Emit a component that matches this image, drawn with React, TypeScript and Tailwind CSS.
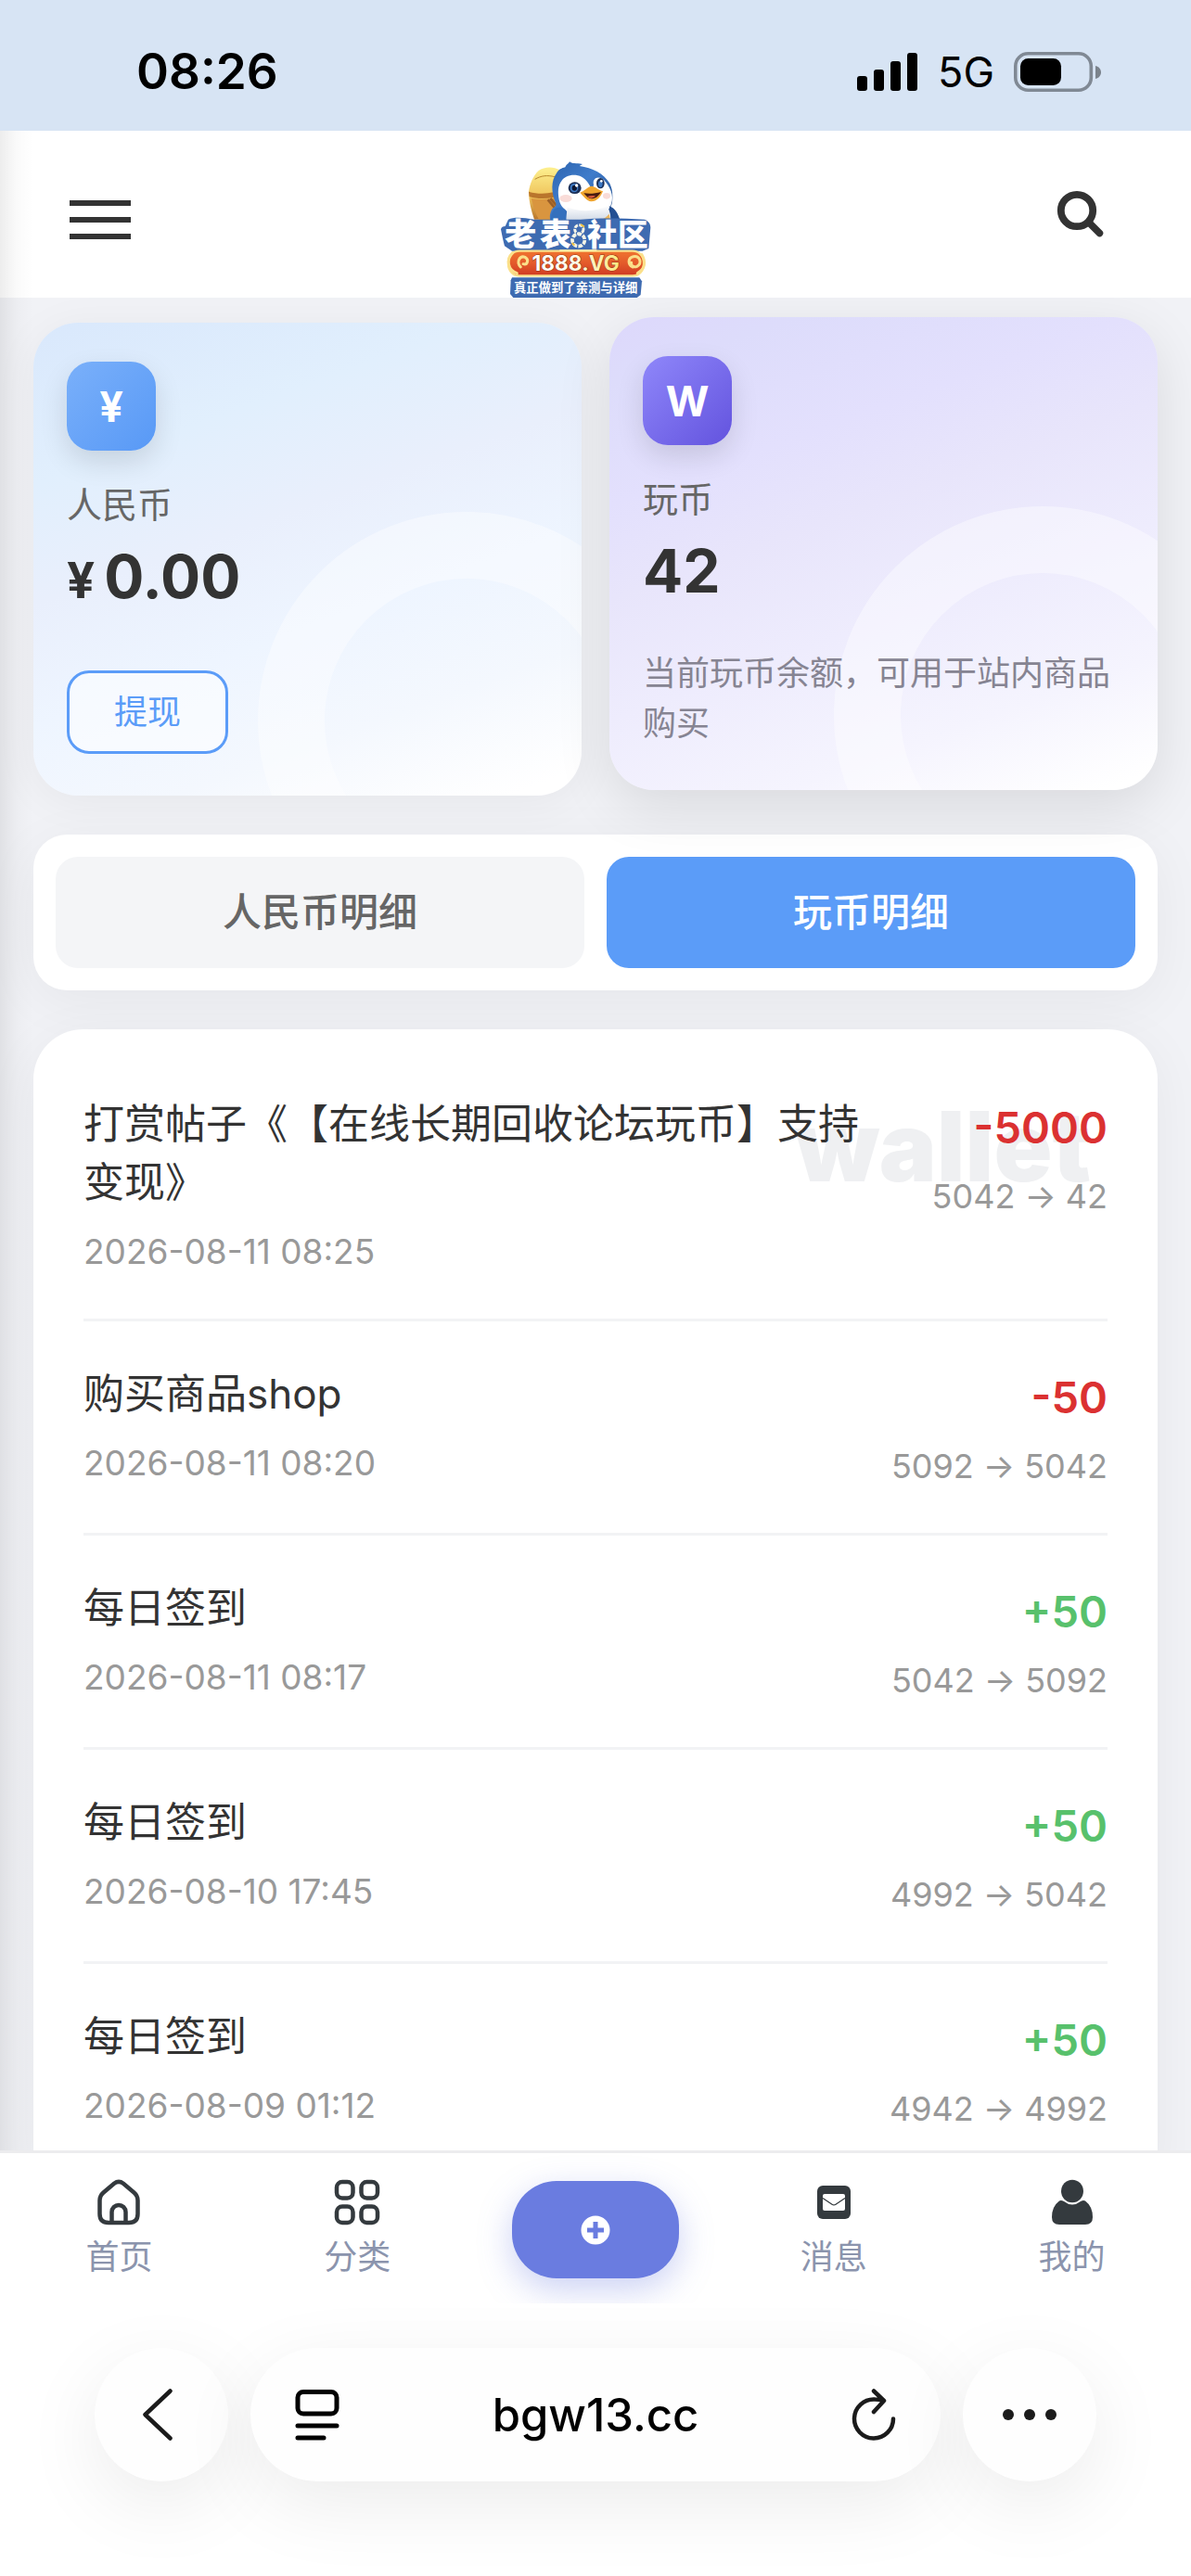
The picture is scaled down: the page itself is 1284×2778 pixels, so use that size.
import React from "react";

type Entry = {
  title: string;
  time: string;
  amount: string;
  from: string;
  to: string;
};

const entries: Entry[] = [
  { title: "打赏帖子《【在线长期回收论坛玩币】支持变现》", time: "2026-08-11 08:25", amount: "-5000", from: "5042", to: "42" },
  { title: "购买商品shop", time: "2026-08-11 08:20", amount: "-50", from: "5092", to: "5042" },
  { title: "每日签到", time: "2026-08-11 08:17", amount: "+50", from: "5042", to: "5092" },
  { title: "每日签到", time: "2026-08-10 17:45", amount: "+50", from: "4992", to: "5042" },
  { title: "每日签到", time: "2026-08-09 01:12", amount: "+50", from: "4942", to: "4992" },
];

function StatusBar() {
  return (
    <div className="flex h-[141px] shrink-0 items-center justify-between bg-[#d7e4f4] pt-3.5 pr-[96px] pl-[147px]">
      <span className="text-[53px] leading-none font-semibold text-black">08:26</span>
      <div className="flex items-center gap-[21px]">
        <svg width="66" height="42" viewBox="0 0 66 42" className="fill-black">
          <rect x="0" y="25" width="11" height="16" rx="3" />
          <rect x="18" y="18" width="11" height="23" rx="3" />
          <rect x="36" y="9" width="11" height="32" rx="3" />
          <rect x="54" y="0" width="11" height="41" rx="3" />
        </svg>
        <span className="text-[45px] leading-none text-black">5G</span>
        <svg width="95" height="44" viewBox="0 0 95 44">
          <rect x="1.8" y="1.8" width="81.500" height="39.500" rx="13.500" fill="none" stroke="#808994" strokeWidth="3.600" />
          <rect x="7" y="7" width="44" height="29" rx="8.500" fill="#000" />
          <path d="M88 15c4 1 6 4 6 7s-2 6-6 7z" fill="#7b838c" />
        </svg>
      </div>
    </div>
  );
}

function Logo() {
  return (
    <svg width="240" height="180" viewBox="0 3 720 540" role="img" aria-label="老表社区 1888.VG">
      <defs>
        <linearGradient id="barrel" x1="0" y1="0" x2="0" y2="1">
          <stop offset="0" stopColor="#fdf08f" />
          <stop offset="0.55" stopColor="#efc45c" />
          <stop offset="1" stopColor="#b9752c" />
        </linearGradient>
        <linearGradient id="blue" x1="0" y1="0" x2="1" y2="1">
          <stop offset="0" stopColor="#2b62ad" />
          <stop offset="0.4" stopColor="#3f7ccb" />
          <stop offset="1" stopColor="#1c3f78" />
        </linearGradient>
        <linearGradient id="belly" x1="0" y1="0" x2="0" y2="1">
          <stop offset="0" stopColor="#ffffff" />
          <stop offset="1" stopColor="#c9d3e2" />
        </linearGradient>
        <linearGradient id="red" x1="0" y1="0" x2="0" y2="1">
          <stop offset="0" stopColor="#f0742f" />
          <stop offset="0.5" stopColor="#e35a2b" />
          <stop offset="1" stopColor="#cf3a22" />
        </linearGradient>
        <linearGradient id="gold" x1="0" y1="0" x2="1" y2="0">
          <stop offset="0" stopColor="#ffffff" />
          <stop offset="0.5" stopColor="#fffbe6" />
          <stop offset="1" stopColor="#fbe67e" />
        </linearGradient>
      </defs>
      <path d="M182 132c18-14 50-14 68-2l-6 160h-76c-10-30-18-60-18-90 4-26 14-50 32-68z" fill="url(#barrel)" />
      <path d="M150 200c26 8 54 8 80 2l2 16c-28 6-56 6-80-2z" fill="#b9752c" />
      <path d="M170 160c20-12 40-14 64-8" fill="none" stroke="#b98a2e" strokeWidth="3" />
      <path d="M158 222c8 30 14 50 26 70h50v-72c-26 6-52 6-76 2z" fill="#d9953f" />
      <path d="M212 226l40 48M220 222l44 50" stroke="#9b5f28" strokeWidth="8" />
      <path d="M240 140c8-12 16-16 28-19 4-10 10-10 14-18 8 8 20 4 42 8l-10 6c42 6 78 24 98 56 10 22 10 40 8 62-2 10-6 16-6 16 16 12 26 22 34 49H222c-6-16-4-30 4-44 10-8 14-10 12-18-16-36-16-74 2-98z" fill="url(#blue)" />
      <path d="M256 166c14-24 64-30 86 6l14 22 4-16c-6-24 20-34 40-8 20 26 26 52 14 78-16 30-46 38-78 36-42-2-82-24-88-58-4-24-4-44 8-60z" fill="#fff" />
      <path d="M274 250c44 18 96 14 130-4 8 16 14 38 14 54H268c4-24 6-30 6-50z" fill="url(#belly)" />
      <path d="M270 260c-14-12-34-12-42 4-6 12-6 18-6 36h50z" fill="#3470bd" />
      <path d="M410 246c20 8 30 24 36 54h-32c2-20 2-38-4-54z" fill="#234f93" />
      <path d="M262 290c20 6 50 8 76 8s60-8 72-26l6 30H262z" fill="#eab45c" />
      <ellipse cx="299" cy="188" rx="21" ry="19" fill="#1b2f57" />
      <ellipse cx="297" cy="188" rx="13" ry="14" fill="#3c78c4" />
      <ellipse cx="298" cy="188" rx="8" ry="9" fill="#0c1530" />
      <circle cx="305" cy="180" r="5" fill="#fff" />
      <ellipse cx="382" cy="173" rx="13" ry="17" fill="#1b2f57" />
      <ellipse cx="382" cy="175" rx="7" ry="11" fill="#3c78c4" />
      <circle cx="385" cy="166" r="4" fill="#fff" />
      <ellipse cx="270" cy="222" rx="20" ry="12" fill="#f9dcd8" />
      <ellipse cx="402" cy="214" rx="12" ry="10" fill="#f9dcd8" />
      <path d="M316 203c12-4 26-20 38-21 14 2 22 14 36 16-6 18-20 34-38 34-14-2-24-16-36-29z" fill="#f0a52e" />
      <path d="M328 205c16 2 36 2 56-4-8 14-18 22-32 22-8 0-16-8-24-18z" fill="#4a1d12" />
      <path d="M340 216c8-4 18-4 26-2-8 8-18 10-26 2z" fill="#d85a3c" />
      <path d="M84 290c20-10 50-6 84 0h150c60-6 140-4 206 0 14 4 20 16 20 26l-6 68-20 8H96l-24-16c-4-14-8-34-12-54 2-8 6-10 14-10z" fill="#3e6bb1" />
      <text x="73" y="376" fontSize="102" className="fill-white font-black">老</text>
      <text x="186" y="376" fontSize="102" className="fill-white font-black">表</text>
      <text x="339" y="374" fontSize="98" className="fill-white font-black">社</text>
      <text x="438" y="374" fontSize="98" className="fill-white font-black">区</text>
      <circle cx="313" cy="322" r="14" fill="none" stroke="#f3f4e6" strokeWidth="9" strokeDasharray="12 4" />
      <circle cx="311" cy="357" r="20" fill="none" stroke="#f3f4e6" strokeWidth="11" strokeDasharray="14 4" />
      <path d="M318 306l12 8M290 366l8 8" stroke="#f4c542" strokeWidth="6" />
      <rect x="84" y="392" width="438" height="80" rx="36" fill="url(#red)" stroke="#fbe08a" strokeWidth="7" />
      <path d="M124 444c-16-18-2-38 14-32 14 8 8 26-6 22M112 464c-30-10-36-44-14-66M486 444c-16-8-16-30 2-34 22-4 30 22 12 32-10 4-20-2-18-12M502 464c24-14 28-36 14-60" fill="none" stroke="#fbe08a" strokeWidth="9" strokeLinecap="round" />
      <path d="M250 390h120" stroke="#fff3b0" strokeWidth="4" />
      <text x="302" y="456" fontSize="68" textAnchor="middle" fill="url(#gold)" stroke="#8f2f16" strokeWidth="3" paintOrder="stroke" className="font-bold">1888.VG</text>
      <path d="M96 478h412l8 12-4 44-12 9H100l-10-12 2-44z" fill="#3e6bb1" />
      <text x="302" y="525" fontSize="40" textAnchor="middle" className="fill-white font-bold">真正做到了亲测与详细</text>
    </svg>
  );
}

function Header() {
  return (
    <header className="flex h-[180px] shrink-0 items-center justify-between bg-white pr-[93px] pl-[75px]">
      <button type="button" aria-label="菜单" className="mt-3 flex w-[66px] flex-col gap-3">
        <span className="h-1.5 bg-[#333]" />
        <span className="h-1.5 bg-[#333]" />
        <span className="h-1.5 bg-[#333]" />
      </button>
      <Logo />
      <button type="button" aria-label="搜索">
        <svg width="52" height="52" viewBox="0 0 52 52" fill="none" stroke="#333" strokeLinecap="round">
          <circle cx="22" cy="22" r="17.200" strokeWidth="7.800" />
          <path d="M36 36l10.500 10.500" strokeWidth="7.500" />
        </svg>
      </button>
    </header>
  );
}

function Ring() {
  return (
    <div className="pointer-events-none absolute -right-[101px] -bottom-[144px] size-[450px] rounded-full border-[72px] border-white/40" />
  );
}

function BalanceCards() {
  return (
    <section className="grid grid-cols-2 gap-[30px]">
      <div className="relative h-[510px] overflow-hidden rounded-[48px] bg-[linear-gradient(160deg,#d9e8fc_0%,#e1effd_24%,#e9effc_42%,#eef5ff_60%,#f4f8fe_78%,#ffffff_96%)] p-9 pt-[42px] shadow-[0_6px_48px_rgba(0,0,0,0.05)]">
        <Ring />
        <div className="relative flex flex-col items-start">
          <div className="flex size-24 items-center justify-center rounded-[27px] bg-[linear-gradient(135deg,#7ab0fa,#5899f6)] text-[45px] leading-none font-bold text-white shadow-[0_12px_30px_rgba(0,0,0,0.12)]">
            ¥
          </div>
          <div className="mt-[30px] text-[38px] leading-[56px] text-[#666]">人民币</div>
          <div className="mt-3.5 flex h-[72px] items-baseline gap-2.5 leading-[72px] font-bold text-[#333]">
            <span className="text-[53px]">¥</span>
            <span className="text-[64px]">0.00</span>
          </div>
          <button type="button" className="mt-[65px] h-[90px] rounded-3xl border-3 border-[#5b9cf8] bg-white/50 px-12 text-[36px] leading-none text-[#5b9cf8]">
            提现
          </button>
        </div>
      </div>
      <div className="relative -mt-1.5 mb-1.5 h-[510px] overflow-hidden rounded-[48px] bg-[linear-gradient(160deg,#ddd8fc_0%,#dddcfb_10%,#e3e0fd_28%,#e8e5fb_42%,#eeecfd_60%,#f5f4fe_80%,#ffffff_97%)] p-9 pt-[42px] shadow-[0_18px_60px_rgba(0,0,0,0.1)]">
        <Ring />
        <div className="relative flex flex-col items-start">
          <div className="flex size-24 items-center justify-center rounded-[27px] bg-[linear-gradient(135deg,#8f87fa,#6353de)] text-[45px] leading-none font-bold text-white shadow-[0_12px_30px_rgba(0,0,0,0.12)]">
            W
          </div>
          <div className="mt-[30px] text-[38px] leading-[56px] text-[#666]">玩币</div>
          <div className="mt-3.5 text-[64px] leading-[72px] font-bold text-[#333]">42</div>
          <p className="mt-[47px] text-[36px] leading-[54px] text-[#868492]">当前玩币余额，可用于站内商品购买</p>
        </div>
      </div>
    </section>
  );
}

function Tabs() {
  return (
    <div className="mt-[42px] grid grid-cols-2 gap-6 rounded-[36px] bg-white p-6 shadow-[0_12px_60px_rgba(0,0,0,0.05)]">
      <button type="button" className="h-[120px] rounded-3xl bg-[#f4f5f7] text-[42px] leading-none font-medium text-[#666]">
        人民币明细
      </button>
      <button type="button" className="h-[120px] rounded-3xl bg-[#5b9cf8] text-[42px] leading-none font-medium text-white">
        玩币明细
      </button>
    </div>
  );
}

function Arrow() {
  return <span className="mx-2.5">→</span>;
}

function History() {
  return (
    <section className="relative mt-[42px] rounded-t-[54px] bg-white px-[54px] pt-6 shadow-[0_12px_60px_rgba(0,0,0,0.05)]">
      <div className="pointer-events-none absolute top-[66px] right-[72px] text-[104px] leading-[120px] font-black text-[#eff0f2]">
        wallet
      </div>
      <ul className="relative">
        {entries.map((e) => (
          <li key={e.time} className="flex items-start gap-12 border-b-3 border-[#f2f3f5] py-[45px]">
            <div className="flex-1">
              <div className="pt-0.5 text-[44px] leading-[63px] text-[#333] [text-spacing-trim:space-all]">{e.title}</div>
              <div className="mt-4 text-[37px] leading-[54px] text-[#999]">{e.time}</div>
            </div>
            <div className="text-right whitespace-nowrap">
              <div className={e.amount.startsWith("-") ? "text-[47px] leading-[74px] font-semibold text-[#db3131]" : "text-[47px] leading-[74px] font-semibold text-[#58c16c]"}>
                {e.amount}
              </div>
              <div className="mt-2.5 text-[36px] leading-[54px] text-[#999]">
                {e.from}
                <Arrow />
                {e.to}
              </div>
            </div>
          </li>
        ))}
      </ul>
    </section>
  );
}

function NavItem({ label, children }: { label: string; children: React.ReactNode }) {
  return (
    <a href="#" className="flex flex-col items-center pt-[26px] text-[36px] leading-[54px] text-[#8b94ad]">
      <span className="mb-[5px] flex h-[54px] items-center justify-center">{children}</span>
      {label}
    </a>
  );
}

function BottomNav() {
  return (
    <nav className="grid h-[165px] shrink-0 grid-cols-5 overflow-hidden border-t-3 border-[#ececee] bg-white">
      <NavItem label="首页">
        <svg width="48" height="50" viewBox="0 0 48 50" fill="none" stroke="#343a3e" strokeWidth="4.500">
          <path d="M19 4.800Q24 1 29 4.800L40.500 14.500Q44.500 18 44.500 23V37.500Q44.500 47 35 47H13Q3.500 47 3.500 37.500V23Q3.500 18 7.500 14.500Z" />
          <path d="M16.500 47V35.500a7.500 7.500 0 0 1 15 0V47" />
        </svg>
      </NavItem>
      <NavItem label="分类">
        <svg width="50" height="50" viewBox="0 0 50 50" fill="none" stroke="#343a3e" strokeWidth="4.500">
          <rect x="3" y="3" width="17.500" height="17.500" rx="6" />
          <rect x="29.500" y="3" width="17.500" height="17.500" rx="6" />
          <rect x="3" y="29.500" width="17.500" height="17.500" rx="6" />
          <rect x="29.500" y="29.500" width="17.500" height="17.500" rx="6" />
        </svg>
      </NavItem>
      <div className="flex justify-center pt-[30px]">
        <button type="button" aria-label="发布" className="flex h-[105px] w-[180px] items-center justify-center rounded-[48px] bg-[#6a7ce0] shadow-[0_12px_36px_rgba(106,124,224,0.35)]">
          <svg width="32" height="32" viewBox="0 0 32 32">
            <circle cx="16" cy="16" r="15.500" fill="#fff" />
            <path d="M16 7v18M7 16h18" stroke="#6a7ce0" strokeWidth="5" />
          </svg>
        </button>
      </div>
      <NavItem label="消息">
        <svg width="36" height="36" viewBox="0 0 36 36">
          <rect width="36" height="36" rx="6" fill="#343a3e" />
          <rect x="6" y="9" width="24" height="18" rx="2" fill="#fff" />
          <path d="M6 13.500l10 6.800q2 1.300 4 0l10-6.800" fill="none" stroke="#343a3e" strokeWidth="1.300" />
        </svg>
      </NavItem>
      <NavItem label="我的">
        <svg width="44" height="50" viewBox="0 0 44 50" fill="#343a3e">
          <ellipse cx="22" cy="13" rx="12" ry="12.200" />
          <path d="M8 23.500q2-1 5 .5 9 7 18 0 3-1.500 5-.5 8 6 8 17.500 0 8-8 8H8q-8 0-8-8Q0 29.500 8 23.500z" />
        </svg>
      </NavItem>
    </nav>
  );
}

function BrowserBar() {
  return (
    <div className="flex h-[294px] shrink-0 items-start gap-6 bg-white px-[102px] pt-12">
      <button type="button" aria-label="后退" className="flex size-36 shrink-0 items-center justify-center rounded-full bg-[#fefefe] pr-2 shadow-[0_24px_84px_rgba(0,0,0,0.08)]">
        <svg width="34" height="56" viewBox="0 0 34 56" fill="none" stroke="#1b1b1b" strokeWidth="4.500" strokeLinecap="round" strokeLinejoin="round">
          <path d="M30.500 2.500L3.500 28l27 25.500" />
        </svg>
      </button>
      <div className="flex h-36 flex-1 items-center justify-between rounded-full bg-[#fefefe] px-12 shadow-[0_24px_84px_rgba(0,0,0,0.08)]">
        <button type="button" aria-label="页面菜单">
          <svg width="48" height="56" viewBox="0 0 48 56" fill="none" stroke="#000" strokeWidth="5" strokeLinecap="round">
            <rect x="3" y="3.500" width="42" height="23.500" rx="6" />
            <path d="M3 40h42M3 53h28" />
          </svg>
        </button>
        <span className="text-[49px] leading-none font-medium text-black">bgw13.cc</span>
        <button type="button" aria-label="刷新">
          <svg width="48" height="56" viewBox="0 0 48 56" fill="none" stroke="#1b1b1b" strokeWidth="4.500" strokeLinecap="round" strokeLinejoin="round">
            <path d="M25 11.500a21 21 0 1 0 20 21M25 11.500q5 0 9 1.500M24 2.500l11 10.500L24 25" />
          </svg>
        </button>
      </div>
      <button type="button" aria-label="更多" className="flex size-36 shrink-0 items-center justify-center gap-[11px] rounded-full bg-[#fefefe] shadow-[0_24px_84px_rgba(0,0,0,0.08)]">
        <span className="size-3 rounded-full bg-[#1b1b1b]" />
        <span className="size-3 rounded-full bg-[#1b1b1b]" />
        <span className="size-3 rounded-full bg-[#1b1b1b]" />
      </button>
    </div>
  );
}

export default function App() {
  return (
    <div className="flex h-screen flex-col overflow-hidden bg-white font-[Inter,'Noto_Sans_CJK_SC',sans-serif]">
      <StatusBar />
      <div className="relative flex min-h-0 flex-1 flex-col">
        <Header />
        <main className="min-h-0 flex-1 overflow-hidden bg-[#f1f2f6] px-9 pt-[27px]">
          <BalanceCards />
          <Tabs />
          <History />
        </main>
        <div className="pointer-events-none absolute inset-y-0 left-0 w-9 bg-[linear-gradient(90deg,rgba(0,0,0,0.07),rgba(0,0,0,0.02)_50%,transparent)]" />
      </div>
      <BottomNav />
      <BrowserBar />
    </div>
  );
}
